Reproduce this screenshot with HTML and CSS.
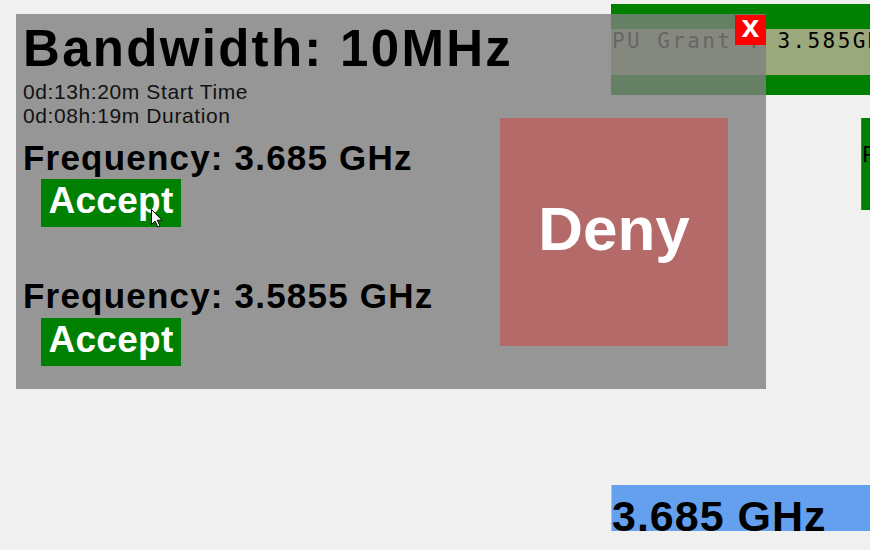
FILE: index.html
```html
<!DOCTYPE html>
<html>
<head>
<meta charset="utf-8">
<link rel="stylesheet" href="styles.css">
</head>
<body>
<div class="stage">
  <div class="grant grant-a">
    <div class="grant-body">PU Grant : 3.585GHz</div>
  </div>
  <div class="grant grant-b">
    <div class="grant-label">PU Grant : 3.685GHz</div>
  </div>
  <div class="freq-label">3.685 GHz</div>

  <div class="modal">
    <div class="modal-info">
      <h1 class="title">Bandwidth: 10MHz</h1>
      <div class="meta">0d:13h:20m Start Time</div>
      <div class="meta">0d:08h:19m Duration</div>
      <div class="offers">
        <div class="offer">
          <div class="freq">Frequency: 3.685 GHz</div>
          <div class="accept">Accept</div>
        </div>
        <div class="offer">
          <div class="freq">Frequency: 3.5855 GHz</div>
          <div class="accept">Accept</div>
        </div>
      </div>
    </div>
    <div class="deny">Deny</div>
    <div class="close">x</div>
  </div>

  <svg class="cursor" width="13" height="19" viewBox="0 0 13 19">
    <path d="M0.5 0.5 L0.5 15.5 L4 12 L6.8 18 L9 17 L6.3 11.2 L11 11.2 Z" fill="#fff" stroke="#000" stroke-width="1" stroke-linejoin="miter"/>
  </svg>
</div>
</body>
</html>
```

FILE: styles.css
```css
html, body {
  margin: 0;
  padding: 0;
  background: #f0f0f0;
}

.stage {
  position: relative;
  width: 870px;
  height: 550px;
  overflow: hidden;
  font-family: "Liberation Sans", Arial, sans-serif;
}

/* items on the free canvas */
.grant {
  position: absolute;
  background: #008000;
  box-sizing: border-box;
}

.grant-a {
  left: 611px;
  top: 4px;
  width: 320px;
  padding: 25px 0 20px;
}

.grant-body {
  height: 46px;
  background: #9aa87b;
  font-family: "DejaVu Sans Mono", monospace;
  font-size: 21px;
  line-height: 24px;
  letter-spacing: 2.4px;
  color: #000;
  white-space: nowrap;
  padding-left: 1px;
}

.grant-b {
  left: 861px;
  top: 118px;
  width: 40px;
  height: 92px;
  border-left: 1px solid #2e922e;
  padding-top: 25px;
}

.grant-label {
  font-family: "DejaVu Sans Mono", monospace;
  font-size: 21px;
  line-height: 24px;
  letter-spacing: 2.4px;
  color: #000;
  white-space: nowrap;
}

.freq-label {
  position: absolute;
  left: 611px;
  top: 485px;
  width: 259px;
  height: 46px;
  box-sizing: border-box;
  background: #64a0ee;
  border-left: 1px solid #f0a8a8;
  overflow: hidden;
  font-size: 43px;
  font-weight: bold;
  line-height: 46px;
  letter-spacing: 1px;
  padding-top: 8px;
  color: #000;
  white-space: nowrap;
}

/* modal overlay */
.modal {
  position: absolute;
  left: 16px;
  top: 14px;
  width: 750px;
  height: 375px;
  box-sizing: border-box;
  background: rgba(128, 128, 128, 0.8);
  display: flex;
  align-items: flex-start;
  padding: 4px 0 0 7px;
}

.modal-info {
  flex: 1;
  min-width: 0;
}

.title {
  margin: 0;
  font-size: 51px;
  line-height: 62px;
  font-weight: bold;
  letter-spacing: 2.3px;
  color: #000;
  white-space: nowrap;
}

.meta {
  font-size: 21px;
  line-height: 24px;
  letter-spacing: 0.6px;
  color: #111;
}

.offers {
  display: flex;
  flex-direction: column;
  gap: 49px;
  margin-top: 9.5px;
}

.freq {
  font-size: 35px;
  line-height: 39px;
  font-weight: bold;
  letter-spacing: 1.2px;
  color: #000;
  white-space: nowrap;
}

.accept {
  margin: 2.5px 0 0 18px;
  width: 140px;
  height: 48px;
  box-sizing: border-box;
  padding-bottom: 4px;
  background: #008000;
  color: #fff;
  font-size: 37px;
  line-height: 44px;
  font-weight: bold;
  letter-spacing: 0.3px;
  display: flex;
  align-items: center;
  justify-content: center;
}

.deny {
  flex-shrink: 0;
  margin: 100px 38px 0 0;
  width: 228px;
  height: 228px;
  box-sizing: border-box;
  padding-bottom: 7px;
  background: #b46a68;
  color: #fff;
  font-size: 62px;
  font-weight: bold;
  display: flex;
  align-items: center;
  justify-content: center;
}

.close {
  position: absolute;
  top: 1px;
  right: 0;
  width: 31px;
  height: 30px;
  box-sizing: border-box;
  padding-bottom: 7px;
  background: #ff0000;
  color: #fff;
  font-size: 32px;
  font-weight: bold;
  display: flex;
  align-items: center;
  justify-content: center;
}

.cursor {
  position: absolute;
  left: 151px;
  top: 209px;
}
```
